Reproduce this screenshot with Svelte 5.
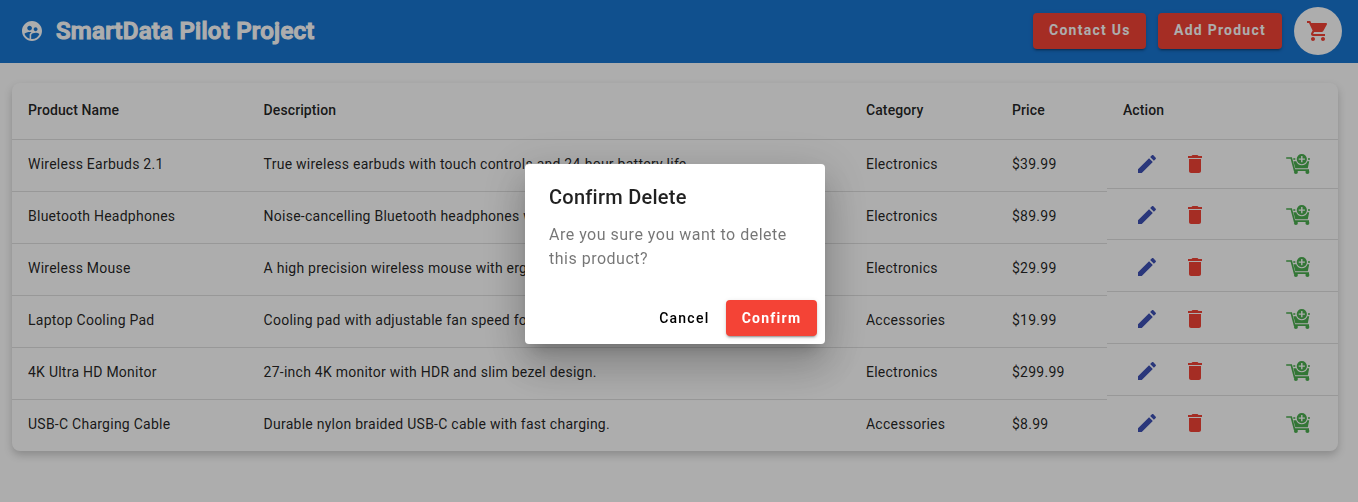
<script>
  const products = [
    { name: 'Wireless Earbuds 2.1', description: 'True wireless earbuds with touch controls and 24-hour battery life.', category: 'Electronics', price: '$39.99' },
    { name: 'Bluetooth Headphones', description: 'Noise-cancelling Bluetooth headphones with deep bass.', category: 'Electronics', price: '$89.99' },
    { name: 'Wireless Mouse', description: 'A high precision wireless mouse with ergonomic design.', category: 'Electronics', price: '$29.99' },
    { name: 'Laptop Cooling Pad', description: 'Cooling pad with adjustable fan speed for laptops.', category: 'Accessories', price: '$19.99' },
    { name: '4K Ultra HD Monitor', description: '27-inch 4K monitor with HDR and slim bezel design.', category: 'Electronics', price: '$299.99' },
    { name: 'USB-C Charging Cable', description: 'Durable nylon braided USB-C cable with fast charging.', category: 'Accessories', price: '$8.99' }
  ];
</script>

<div class="page">
  <header>
    <svg class="logo" viewBox="0 0 24 24"><path d="M11.99 2c-5.52 0-10 4.48-10 10s4.48 10 10 10 10-4.48 10-10-4.48-10-10-10zm3.61 6.34c1.07 0 1.93.86 1.93 1.93 0 1.07-.86 1.93-1.93 1.93-1.07 0-1.93-.86-1.93-1.93-.01-1.07.86-1.93 1.93-1.93zm-6-1.58c1.3 0 2.36 1.06 2.36 2.36 0 1.3-1.06 2.36-2.36 2.36s-2.36-1.06-2.36-2.36c0-1.31 1.05-2.36 2.36-2.36zm0 9.13v3.75c-2.4-.75-4.3-2.6-5.14-4.96 1.05-1.12 3.67-1.69 5.14-1.69.53 0 1.2.08 1.9.22-1.64.87-1.9 2.02-1.9 2.68zM11.99 20c-.27 0-.53-.01-.79-.04v-4.07c0-1.42 2.94-2.13 4.4-2.13 1.07 0 2.92.39 3.84 1.15-1.17 2.97-4.06 5.09-7.45 5.09z" /></svg>
    <h1>SmartData Pilot Project</h1>
    <button class="btn warn contact">Contact Us</button>
    <button class="btn warn add">Add Product</button>
    <button class="cart" aria-label="Cart">
      <svg viewBox="0 0 24 24"><path d="M7 18c-1.1 0-1.99.9-1.99 2S5.9 22 7 22s2-.9 2-2-.9-2-2-2zM1 2v2h2l3.6 7.59-1.35 2.45c-.16.28-.25.61-.25.96 0 1.1.9 2 2 2h12v-2H7.42c-.14 0-.25-.11-.25-.25l.03-.12.9-1.63h7.45c.75 0 1.41-.41 1.75-1.03l3.58-6.49c.08-.14.12-.31.12-.48 0-.55-.45-1-1-1H5.21l-.94-2H1zm16 16c-1.1 0-1.99.9-1.99 2s.89 2 1.99 2 2-.9 2-2-.9-2-2-2z" /></svg>
    </button>
  </header>

  <main>
    <div class="table">
      <div class="row head">
        <div>Product Name</div>
        <div>Description</div>
        <div>Category</div>
        <div>Price</div>
        <div>Action</div>
      </div>
      {#each products as p}
        <div class="row item">
          <div class="cell">{p.name}</div>
          <div class="cell">{p.description}</div>
          <div class="cell">{p.category}</div>
          <div class="cell">{p.price}</div>
          <div class="actions">
            <svg class="edit" viewBox="0 0 24 24"><path d="M3 17.25V21h3.75L17.81 9.94l-3.75-3.75L3 17.25zM20.71 7.04c.39-.39.39-1.02 0-1.41l-2.34-2.34c-.39-.39-1.02-.39-1.41 0l-1.83 1.83 3.75 3.75 1.83-1.83z" /></svg>
            <svg class="delete" viewBox="0 0 24 24"><path d="M6 19c0 1.1.9 2 2 2h8c1.1 0 2-.9 2-2V7H6v12zM19 4h-3.5l-1-1h-5l-1 1H5v2h14V4z" /></svg>
            <svg class="add-cart" viewBox="0 0 24 20">
              <path class="line" d="M.2 4H5.3L8.5 16.1H23" />
              <path d="M7.4 7.2H10.2A5.9 5.9 0 0 0 21.4 7.2H23.2L21.8 14.2H9.3z" />
              <path fill-rule="evenodd" d="M15.8 0a5.1 5.1 0 1 1 0 10.2a5.1 5.1 0 0 1 0-10.2zM15.1 2V4.4H12.7V5.8H15.1V8.2H16.5V5.8H18.9V4.4H16.5V2z" />
              <rect x="7.3" y="4.2" width="2" height="1.6" />
              <rect x="22" y="4.2" width="1.9" height="1.6" />
              <circle cx="9.9" cy="18" r="2" />
              <circle cx="21.4" cy="18" r="2" />
            </svg>
          </div>
        </div>
      {/each}
    </div>
  </main>
</div>

<div class="overlay">
  <div class="dialog" role="dialog">
    <h2>Confirm Delete</h2>
    <p>Are you sure you want to delete this product?</p>
    <div class="buttons">
      <button class="btn cancel">Cancel</button>
      <button class="btn warn confirm">Confirm</button>
    </div>
  </div>
</div>

<style>
  :global(body) {
    margin: 0;
    background: #fff;
    overflow: hidden;
  }
  .page, .overlay, button {
    font-family: Roboto, sans-serif;
  }
  .page {
    height: 502px;
    background: #fff;
    color: rgba(0, 0, 0, 0.87);
  }
  header {
    height: 63px;
    box-sizing: border-box;
    padding: 0 16px 1px 20px;
    display: flex;
    align-items: center;
    background: #1976d2;
    color: #fff;
  }
  .logo {
    width: 24px;
    height: 24px;
    fill: #fff;
  }
  h1 {
    margin: 0 auto 0 12px;
    font-size: 24px;
    line-height: 32px;
    font-weight: 500;
    letter-spacing: 0.26px;
    white-space: nowrap;
    -webkit-text-stroke: 1.2px #fff;
  }
  .btn {
    height: 36px;
    padding: 0 16px;
    border: 0;
    border-radius: 4px;
    background: transparent;
    font-size: 14px;
    font-weight: 500;
    letter-spacing: 1.25px;
    white-space: nowrap;
  }
  .warn {
    background: #f44336;
    color: #fff;
    font-weight: 700;
    box-shadow: 0 3px 1px -2px rgba(0, 0, 0, 0.2), 0 2px 2px rgba(0, 0, 0, 0.14), 0 1px 5px rgba(0, 0, 0, 0.12);
  }
  header .warn {
    padding-bottom: 3px;
  }
  .contact {
    width: 113px;
  }
  .add {
    width: 124px;
    margin: 0 12px;
  }
  .cart {
    width: 48px;
    height: 48px;
    padding: 12px;
    border: 0;
    border-radius: 50%;
    background: #fff;
  }
  .cart svg {
    display: block;
    width: 24px;
    height: 24px;
    fill: #f44336;
  }
  main {
    padding: 20px 20px 0 12px;
  }
  .table {
    border-radius: 8px;
    background: #fff;
    font-size: 14px;
    box-shadow: 0 4px 8px rgba(0, 0, 0, 0.2);
  }
  .row {
    display: grid;
    grid-template-columns: 235.6px 602.4px 146px 111px 231px;
  }
  .row > div {
    box-sizing: border-box;
    padding-left: 16px;
    border-bottom: 1px solid rgba(0, 0, 0, 0.12);
    white-space: nowrap;
  }
  .head > div {
    height: 57px;
    line-height: 55px;
    font-weight: 500;
    letter-spacing: 0.1px;
  }
  .item .cell {
    height: 52px;
    line-height: 49px;
    letter-spacing: 0.25px;
  }
  .row > .actions {
    height: 48px;
    padding: 0 28px 1px;
    display: flex;
    align-items: center;
  }
  .row:nth-child(2) > .actions {
    height: 49px;
    padding-bottom: 0;
  }
  .row:last-child > div {
    border-bottom-color: transparent;
  }
  .row:last-child > .cell {
    height: 51px;
  }
  .edit, .delete {
    width: 24px;
    height: 24px;
  }
  .edit {
    fill: #3f51b5;
  }
  .delete {
    margin-left: 24px;
    fill: #f44336;
  }
  .add-cart {
    width: 24px;
    height: 20px;
    margin-left: auto;
    fill: #4caf50;
  }
  .add-cart .line {
    fill: none;
    stroke: #4caf50;
    stroke-width: 1.7;
  }
  .overlay {
    position: fixed;
    inset: 0;
    padding-top: 164px;
    padding-right: 8px;
    display: flex;
    justify-content: center;
    align-items: flex-start;
    box-sizing: border-box;
    background: rgba(0, 0, 0, 0.32);
  }
  .dialog {
    width: 300px;
    height: 180px;
    box-sizing: border-box;
    padding: 17px 8px 8px 24px;
    display: flex;
    flex-direction: column;
    border-radius: 4px;
    background: #fff;
    box-shadow: 0 11px 15px -7px rgba(0, 0, 0, 0.2), 0 24px 38px 3px rgba(0, 0, 0, 0.14), 0 9px 46px 8px rgba(0, 0, 0, 0.12);
  }
  h2 {
    margin: 0;
    font-size: 20px;
    line-height: 32px;
    font-weight: 500;
    letter-spacing: 0.25px;
    color: rgba(0, 0, 0, 0.87);
  }
  p {
    margin: 10px 16px 0 0;
    font-size: 16px;
    line-height: 24px;
    letter-spacing: 0.5px;
    color: rgba(0, 0, 0, 0.54);
  }
  .buttons {
    margin-top: auto;
    display: flex;
    justify-content: flex-end;
    gap: 8.5px;
  }
  .cancel {
    padding: 0 8px;
    color: #000;
  }
  .confirm {
    width: 91px;
    padding: 0 15.5px;
  }
</style>
